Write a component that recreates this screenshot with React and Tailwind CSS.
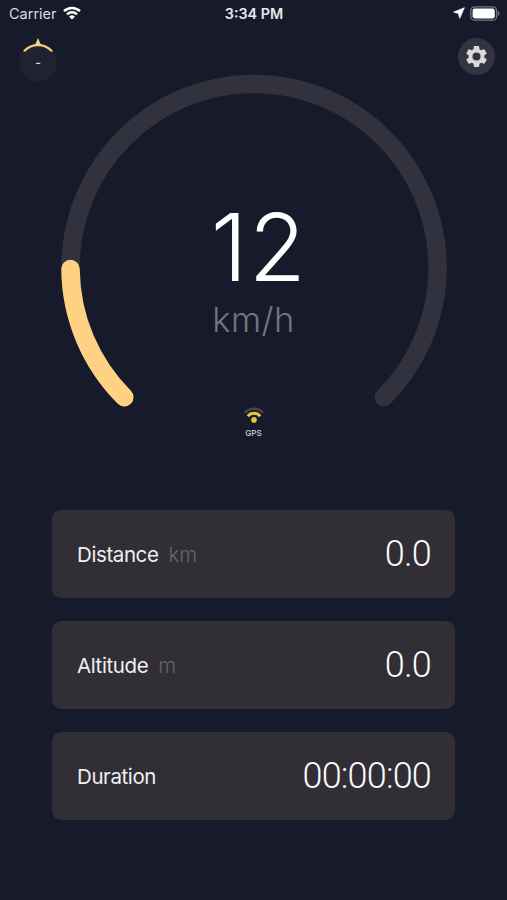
import React from "react";

const stats = [
  { label: "Distance", unit: "km", value: "0.0" },
  { label: "Altitude", unit: "m", value: "0.0" },
  { label: "Duration", unit: "", value: "00:00:00" },
];

function StatusBar() {
  return (
    <div className="grid grid-cols-3 items-center h-7 pl-[9px] pr-[7px] text-[#d9dae2]">
      <div className="flex items-center gap-[6px]">
        <span className="text-[14.5px] leading-7">Carrier</span>
        <svg className="-mt-[2px]" width="18" height="14" viewBox="0 0 18 14" fill="none" stroke="#fff" strokeWidth="2.5">
          <path d="M1 5.2a11.4 11.4 0 0 1 16 0" />
          <path d="M4 8.4a7.1 7.1 0 0 1 10 0" />
          <path d="M9 13.6L6.1 10.8a4.1 4.1 0 0 1 5.8 0z" fill="#fff" stroke="none" />
        </svg>
      </div>
      <span className="-ml-[1px] text-center text-[14.3px] leading-7 font-semibold text-[#e8e9ef]">3:34 PM</span>
      <div className="-mt-[2px] flex items-center justify-end gap-[5px]">
        <svg width="12" height="12" viewBox="0 0 12 12">
          <path d="M11.4 0.7L0.6 5.1l4.8 1.3 1.3 4.9z" fill="#fff" stroke="#fff" strokeWidth="0.7" strokeLinejoin="round" />
        </svg>
        <svg width="30" height="15" viewBox="0 0 30 15">
          <rect x="0.8" y="0.8" width="25.8" height="13.4" rx="3.8" fill="none" stroke="#747681" strokeWidth="1.3" />
          <rect x="2.6" y="2.6" width="22.2" height="9.8" rx="2.1" fill="#fff" />
          <path d="M27.8 5v5c1-.4 1.7-1.4 1.7-2.5S28.8 5.4 27.8 5z" fill="#747681" />
        </svg>
      </div>
    </div>
  );
}

function Compass() {
  return (
    <svg width="40" height="46" viewBox="0 0 40 46">
      <circle cx="20" cy="26" r="18.7" fill="#202231" />
      <path d="M6.5 13.7a19 19 0 0 1 27 0" fill="none" stroke="#f6cd83" strokeWidth="2.2" strokeLinecap="round" />
      <path d="M20 1l3.5 8h-7z" fill="#f6cd83" />
      <text x="20" y="30" textAnchor="middle" fontSize="13" fontWeight="500" fill="#d6d6dc" fontFamily="Inter, sans-serif">-</text>
    </svg>
  );
}

function GearIcon() {
  return (
    <svg width="25" height="25" viewBox="0 0 24 24" fill="#dadadc">
      <path d="M19.43 12.98c.04-.32.07-.64.07-.98s-.03-.66-.07-.98l2.11-1.65c.19-.15.24-.42.12-.64l-2-3.46c-.12-.22-.39-.3-.61-.22l-2.49 1c-.52-.4-1.08-.73-1.69-.98l-.38-2.65C14.46 2.18 14.25 2 14 2h-4c-.25 0-.46.18-.49.42l-.38 2.65c-.61.25-1.17.59-1.69.98l-2.49-1c-.23-.09-.49 0-.61.22l-2 3.46c-.13.22-.07.49.12.64l2.11 1.65c-.04.32-.07.65-.07.98s.03.66.07.98l-2.11 1.65c-.19.15-.24.42-.12.64l2 3.46c.12.22.39.3.61.22l2.49-1c.52.4 1.08.73 1.69.98l.38 2.65c.03.24.24.42.49.42h4c.25 0 .46-.18.49-.42l.38-2.65c.61-.25 1.17-.59 1.69-.98l2.49 1c.23.09.49 0 .61-.22l2-3.46c.12-.22.07-.49-.12-.64l-2.11-1.65zM12 15.9a3.9 3.9 0 1 1 0-7.8 3.9 3.9 0 0 1 0 7.8z" />
    </svg>
  );
}

function Gauge({ speed }) {
  return (
    <div className="grid justify-items-center -mt-px">
      {/* track and progress share one circle, 270 degrees open at the bottom */}
      <svg className="col-start-1 row-start-1" width="387" height="334" viewBox="0 0 387 334" fill="none" strokeWidth="18.5" strokeLinecap="round">
        <path d="M64.3 323.2A183.5 183.5 0 1 1 323.8 323.2" stroke="#32323f" />
        <path d="M64.3 323.2A183.5 183.5 0 0 1 10.5 195" stroke="#ffd183" />
      </svg>
      <div className="col-start-1 row-start-1 flex flex-col items-center pt-[127px]">
        <span className="text-[93px] leading-[92px] font-light tracking-[1.5px] text-white pl-[11px]">{speed}</span>
        <span className="mt-[7px] text-[34.5px] leading-[40px] font-light tracking-[0.4px] text-[#74757f]">km/h</span>
      </div>
    </div>
  );
}

function GpsStatus() {
  return (
    <div className="flex flex-col items-center -mt-px">
      <svg width="20" height="17" viewBox="0 0 20 17" fill="none" strokeWidth="2.6">
        <path d="M1 5.7a12.3 12.3 0 0 1 18 0" stroke="#43434e" />
        <path d="M3.8 9.2a8.2 8.2 0 0 1 12.4 0" stroke="#e9c440" strokeWidth="3" />
        <circle cx="10" cy="12.9" r="2.8" fill="#e9c440" />
      </svg>
      <span className="mt-[3px] text-[8px] leading-[12px] font-medium tracking-[0.1px] text-[#d5d5dc]">GPS</span>
    </div>
  );
}

function StatCard({ label, unit, value }) {
  return (
    <div className="flex items-center justify-between h-[87.5px] rounded-[9px] bg-[#312e35] pl-[25px] pr-[24px]">
      <div className="flex items-baseline gap-[10px] pt-[2px] text-[20.5px] leading-7">
        <span className="text-[#f0eff2] tracking-[-0.4px]">{label}</span>
        {unit && <span className="font-light text-[#66646c]">{unit}</span>}
      </div>
      <span className="font-['Roboto'] font-light text-[36px] leading-10 tracking-[-0.8px] text-[#fafafc]">{value}</span>
    </div>
  );
}

export default function App() {
  return (
    <div className="h-[900px] w-[507px] overflow-hidden bg-[#171a2a] font-['Inter',sans-serif]">
      <StatusBar />
      <div className="flex justify-between items-start h-[47px] pl-[18px] pr-3 pt-[9px]">
        <Compass />
        <button className="flex items-center justify-center size-[37px] rounded-full bg-[#343440] mt-[0.5px]">
          <GearIcon />
        </button>
      </div>
      <Gauge speed={12} />
      <GpsStatus />
      <div className="flex flex-col gap-[23.5px] px-[52px] mt-[71px]">
        {stats.map((s) => (
          <StatCard key={s.label} {...s} />
        ))}
      </div>
    </div>
  );
}
